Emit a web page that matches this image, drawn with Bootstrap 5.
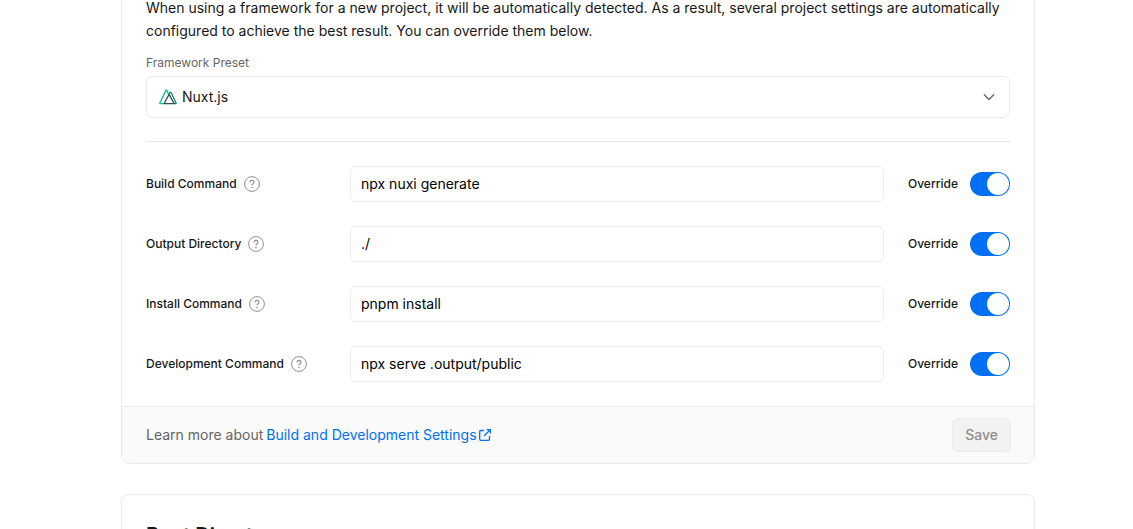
<!DOCTYPE html>
<html lang="en">
<head>
<meta charset="utf-8">
<meta name="viewport" content="width=device-width, initial-scale=1">
<title>Build &amp; Development Settings</title>
<link href="https://cdn.jsdelivr.net/npm/bootstrap@5.3.0/dist/css/bootstrap.min.css" rel="stylesheet">
<style>
body { font-family: Inter, "Liberation Sans", sans-serif; font-size: 14px; line-height: 23px; color: #171717; background: #fff; height: 100vh; overflow: hidden; }
.settings-page { padding: 0 98px 0 121px; margin-top: -29px; }
.settings-card { --bs-card-border-color: #ebebeb; --bs-card-border-radius: 8px; --bs-card-inner-border-radius: 7px; --bs-card-cap-bg: #fafafa; --bs-card-spacer-x: 24px; --bs-card-spacer-y: 24px; --bs-card-color: #171717; margin-bottom: 30px; }
.field-caption { font-size: 12px; line-height: 18px; color: #666; margin: 12px 0 4px; }
.preset-select { height: 42px; padding: 0 40px 2px 35px; font-size: 14px; color: #171717; background: #fff; border: 1px solid #ebebeb; border-radius: 6px; }
.preset-logo { left: 13px; pointer-events: none; }
.preset-chevron { right: 13px; pointer-events: none; }
.divider { margin: 23px 0 24px; border-color: #e5e5e5; opacity: 1; }
.setting-name { width: 180px; gap: 7px; font-size: 12px; line-height: 18px; font-weight: 500; }
.setting-input { height: 36px; padding: 0 10px 2px; font-size: 14px; color: #000; border: 1px solid #ebebeb; border-radius: 6px; }
.override { font-size: 12px; line-height: 18px; font-weight: 500; gap: 12px; }
.override .form-check-input { width: 40px; height: 24px; margin: 0; float: none; border: 0; border-radius: 12px; }
.override .form-check-input:checked { background: #0070f3 url("data:image/svg+xml,%3Csvg xmlns='http://www.w3.org/2000/svg' viewBox='0 0 40 24'%3E%3Ccircle cx='28' cy='12' r='11' fill='%23fff'/%3E%3C/svg%3E") center / 40px 24px no-repeat; }
.settings-footer { padding: 11px 23px 11px 24px; color: #666; border-color: #ebebeb; }
.footer-note { gap: 3px; padding-bottom: 1px; }
.docs-link { color: #0070f3; gap: 2px; }
.save-btn { height: 34px; padding: 0 12px; font-size: 14px; font-weight: 500; line-height: 20px; border-radius: 6px; --bs-btn-disabled-color: #8f8f8f; --bs-btn-disabled-bg: #f2f2f2; --bs-btn-disabled-border-color: #ebebeb; --bs-btn-disabled-opacity: 1; }
.section-title { font-size: 20px; font-weight: 600; line-height: 32px; }
</style>
</head>
<body>
<svg class="d-none" xmlns="http://www.w3.org/2000/svg">
  <symbol id="help" viewBox="0 0 16 16"><g fill="none" stroke="#8f8f8f"><circle cx="8" cy="8" r="7.4"/><path d="M6 6.4C6 5.2 6.8 4.4 8 4.4s2 .8 2 1.9c0 1.5-2 1.5-2 3.1" stroke-width="1.1"/></g><circle cx="8" cy="11.5" r=".8" fill="#8f8f8f"/></symbol>
</svg>
<main class="settings-page">
  <section class="card settings-card">
    <div class="card-body">
      <p class="mb-0">When using a framework for a new project, it will be automatically detected. As a result, several project settings are automatically configured to achieve the best result. You can override them below.</p>
      <label class="d-block field-caption" for="preset">Framework Preset</label>
      <div class="position-relative d-flex align-items-center">
        <select class="form-select preset-select" id="preset"><option>Nuxt.js</option></select>
        <svg class="position-absolute preset-logo" width="18" height="18" viewBox="0 0 18 18" fill="none" stroke-width="1.3" stroke-linejoin="round"><path d="M5.5 15.6H1.3Q.5 15.6.9 14.8L6.8 2.6q.5-1 1 0L9.8 6.5" stroke="#00c58e"/><path d="M9.8 6.5 11 4.4q.5-.7 1 0l5 10.3q.4.9-.5.9h-1.8" stroke="#108775"/><path d="m9.8 6.9-4.3 7.8q-.4.9.5.9h8.2q.9 0 .5-.9L10.4 6.9q-.3-.5-.6 0Z" stroke="#2f495e"/></svg>
        <svg class="position-absolute preset-chevron" width="16" height="16" viewBox="0 0 16 16" fill="none" stroke="#666" stroke-width="1.4"><path d="m3 5.5 5 5 5-5"/></svg>
      </div>
      <hr class="divider">
      <div class="d-grid gap-4">
        <div class="d-flex align-items-center gap-4">
          <div class="setting-name d-flex align-items-center flex-shrink-0"><label for="build">Build Command</label><svg width="16" height="16"><use href="#help"/></svg></div>
          <input class="form-control setting-input" id="build" type="text" value="npx nuxi generate">
          <label class="override form-switch d-flex align-items-center p-0 flex-shrink-0"><span>Override</span><input class="form-check-input" type="checkbox" role="switch" checked></label>
        </div>
        <div class="d-flex align-items-center gap-4">
          <div class="setting-name d-flex align-items-center flex-shrink-0"><label for="output">Output Directory</label><svg width="16" height="16"><use href="#help"/></svg></div>
          <input class="form-control setting-input" id="output" type="text" value="./">
          <label class="override form-switch d-flex align-items-center p-0 flex-shrink-0"><span>Override</span><input class="form-check-input" type="checkbox" role="switch" checked></label>
        </div>
        <div class="d-flex align-items-center gap-4">
          <div class="setting-name d-flex align-items-center flex-shrink-0"><label for="install">Install Command</label><svg width="16" height="16"><use href="#help"/></svg></div>
          <input class="form-control setting-input" id="install" type="text" value="pnpm install">
          <label class="override form-switch d-flex align-items-center p-0 flex-shrink-0"><span>Override</span><input class="form-check-input" type="checkbox" role="switch" checked></label>
        </div>
        <div class="d-flex align-items-center gap-4">
          <div class="setting-name d-flex align-items-center flex-shrink-0"><label for="dev">Development Command</label><svg width="16" height="16"><use href="#help"/></svg></div>
          <input class="form-control setting-input" id="dev" type="text" value="npx serve .output/public">
          <label class="override form-switch d-flex align-items-center p-0 flex-shrink-0"><span>Override</span><input class="form-check-input" type="checkbox" role="switch" checked></label>
        </div>
      </div>
    </div>
    <div class="card-footer settings-footer d-flex align-items-center justify-content-between">
      <div class="footer-note d-flex align-items-center"><span>Learn more about</span>
        <a class="docs-link text-decoration-none d-inline-flex align-items-center" href="#">Build and Development Settings<svg width="12" height="12" viewBox="0 0 12 12" fill="none" stroke="currentColor" stroke-width="1.3"><path d="M5 1.5H2Q.7 1.5.7 2.8V10q0 1.3 1.3 1.3h7.2q1.3 0 1.3-1.3V7M7.5.7h3.8v3.8M11.2.8 5 7"/></svg></a></div>
      <button class="btn save-btn" type="button" disabled>Save</button>
    </div>
  </section>
  <section class="card settings-card">
    <div class="card-body"><h2 class="section-title mb-0">Root Directory</h2></div>
  </section>
</main>
<script src="https://cdn.jsdelivr.net/npm/bootstrap@5.3.0/dist/js/bootstrap.bundle.min.js"></script>
</body>
</html>
